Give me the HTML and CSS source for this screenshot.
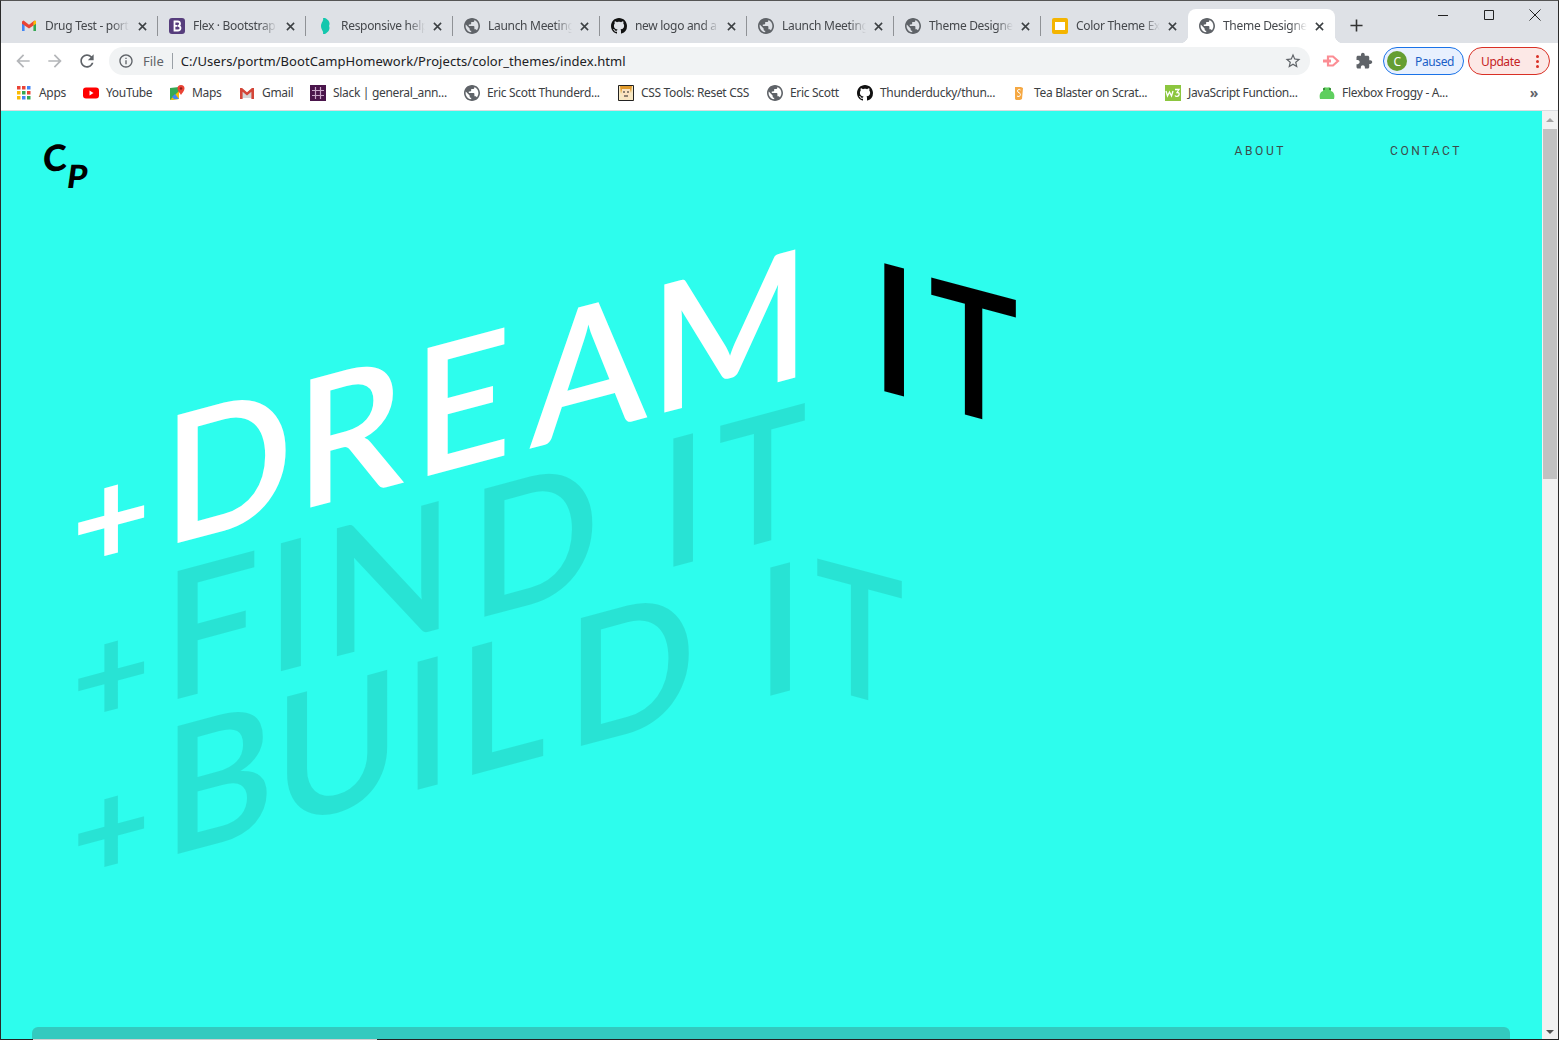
FILE: index.html
```html
<!DOCTYPE html>
<html lang="en">
<head>
    <meta charset="UTF-8">
    <meta name="viewport" content="width=device-width, initial-scale=1.0">
    <title>Theme Designer</title>
    <link rel="stylesheet" href="styles.css">
</head>
<body>
    <svg class="icon-defs">
        <symbol id="i-globe" viewBox="2 2 20 20"><path fill="#5f6368" d="M12 2C6.48 2 2 6.48 2 12s4.48 10 10 10 10-4.48 10-10S17.52 2 12 2zm-1 17.93c-3.95-.49-7-3.85-7-7.93 0-.62.08-1.21.21-1.79L9 15v1c0 1.1.9 2 2 2v1.93zm6.9-2.54c-.26-.81-1-1.39-1.9-1.39h-1v-3c0-.55-.45-1-1-1H8v-2h2c.55 0 1-.45 1-1V7h2c1.1 0 2-.9 2-2v-.41c2.93 1.19 5 4.06 5 7.41 0 2.08-.8 3.97-2.1 5.39z"/></symbol>
        <symbol id="i-github" viewBox="0 0 16 16"><path fill="#111" d="M8 0C3.58 0 0 3.58 0 8c0 3.54 2.29 6.53 5.47 7.59.4.07.55-.17.55-.38 0-.19-.01-.82-.01-1.49-2.01.37-2.53-.49-2.69-.94-.09-.23-.48-.94-.82-1.13-.28-.15-.68-.52-.01-.53.63-.01 1.08.58 1.23.82.72 1.21 1.87.87 2.33.66.07-.52.28-.87.51-1.07-1.78-.2-3.64-.89-3.64-3.95 0-.87.31-1.59.82-2.15-.08-.2-.36-1.02.08-2.12 0 0 .67-.21 2.2.82.64-.18 1.32-.27 2-.27.68 0 1.36.09 2 .27 1.53-1.04 2.2-.82 2.2-.82.44 1.1.16 1.92.08 2.12.51.56.82 1.27.82 2.15 0 3.07-1.87 3.75-3.65 3.95.29.25.54.73.54 1.48 0 1.07-.01 1.93-.01 2.2 0 .21.15.46.55.38A8.013 8.013 0 0016 8c0-4.42-3.58-8-8-8z"/></symbol>
        <symbol id="i-gmail" viewBox="0 0 16 16"><path fill="#4285f4" d="M1 4v9h2.6V6.5z"/><path fill="#34a853" d="M15 4v9h-2.6V6.5z"/><path fill="#ea4335" d="M1 3.6 2.6 2.6 8 6.8l5.4-4.2 1.6 1V5.8L8 10.6 1 5.8z"/><path fill="#fbbc04" d="M12.4 3.4 15 2.6v3.2l-2.6 1.8z"/></symbol>
        <symbol id="i-gmail-red" viewBox="0 0 16 16"><path fill="#d5d5d5" d="M3 3h10v10H3z"/><path fill="#fff" d="M3 3h10L8 8z"/><path fill="#d44638" d="M1 3h2l5 4.2L13 3h2v11h-2.6V6.8L8 10.4 3.600 6.800V14H1z"/></symbol>
        <symbol id="i-close" viewBox="0 0 10 10"><path fill="none" stroke="#3c4043" stroke-width="1.700" d="M1 1l8 8M9 1L1 9"/></symbol>
    </svg>

    <header class="tabstrip">
        <div class="tab">
            <svg class="favicon"><use href="#i-gmail"/></svg>
            <span class="tab-title">Drug Test - port</span>
            <svg class="tab-close"><use href="#i-close"/></svg>
        </div>
        <div class="tab">
            <svg class="favicon" viewBox="0 0 16 16"><rect width="16" height="16" rx="3" fill="#563d7c"/><path fill="none" stroke="#fff" stroke-width="1.8" d="M5.500 3.500h3.200c3 0 3 4 .4 4.300 3.300.2 3.100 4.700-.2 4.700H5.500zM5.500 7.900h3"/></svg>
            <span class="tab-title">Flex · Bootstrap</span>
            <svg class="tab-close"><use href="#i-close"/></svg>
        </div>
        <div class="tab">
            <svg class="favicon" viewBox="0 0 16 16"><path fill="#14c7ad" d="M6 0h2c4 2 5.500 5 4 8 1.500 3-.5 6-4 8H6c1-2.500-2-4.500-2-8s3-5.500 2-8z"/></svg>
            <span class="tab-title">Responsive help</span>
            <svg class="tab-close"><use href="#i-close"/></svg>
        </div>
        <div class="tab">
            <svg class="favicon"><use href="#i-globe"/></svg>
            <span class="tab-title">Launch Meeting</span>
            <svg class="tab-close"><use href="#i-close"/></svg>
        </div>
        <div class="tab">
            <svg class="favicon"><use href="#i-github"/></svg>
            <span class="tab-title">new logo and a</span>
            <svg class="tab-close"><use href="#i-close"/></svg>
        </div>
        <div class="tab">
            <svg class="favicon"><use href="#i-globe"/></svg>
            <span class="tab-title">Launch Meeting</span>
            <svg class="tab-close"><use href="#i-close"/></svg>
        </div>
        <div class="tab">
            <svg class="favicon"><use href="#i-globe"/></svg>
            <span class="tab-title">Theme Designer</span>
            <svg class="tab-close"><use href="#i-close"/></svg>
        </div>
        <div class="tab">
            <svg class="favicon" viewBox="0 0 16 16"><rect width="16" height="16" rx="2" fill="#f4b400"/><rect x="3" y="4" width="10" height="8" fill="#fff"/></svg>
            <span class="tab-title">Color Theme Ex</span>
            <svg class="tab-close"><use href="#i-close"/></svg>
        </div>
        <div class="tab tab-active">
            <svg class="favicon"><use href="#i-globe"/></svg>
            <span class="tab-title">Theme Designer</span>
            <svg class="tab-close"><use href="#i-close"/></svg>
        </div>
        <svg class="new-tab" viewBox="0 0 14 14"><path fill="none" stroke="#333" stroke-width="1.7" d="M7 .5v13M.5 7h13"/></svg>
        <div class="window-controls">
            <svg class="win-btn" viewBox="0 0 12 12"><path stroke="#222" d="M1 6.500h10"/></svg>
            <svg class="win-btn" viewBox="0 0 12 12"><path fill="none" stroke="#222" d="M1.500 1.500h9v9h-9z"/></svg>
            <svg class="win-btn" viewBox="0 0 12 12"><path stroke="#222" d="M.5.500l11 11M11.500.5l-11 11"/></svg>
        </div>
    </header>

    <div class="toolbar">
        <svg class="tool-icon" viewBox="0 0 24 24"><path fill="#b4b6b9" d="M20 11H7.830l5.590-5.590L12 4l-8 8 8 8 1.410-1.410L7.830 13H20v-2z"/></svg>
        <svg class="tool-icon" viewBox="0 0 24 24"><path fill="#b4b6b9" d="M4 11h12.170l-5.590-5.590L12 4l8 8-8 8-1.410-1.410L16.170 13H4v-2z"/></svg>
        <svg class="tool-icon" viewBox="0 0 24 24"><path fill="#5f6368" d="M17.650 6.350C16.200 4.900 14.210 4 12 4c-4.420 0-7.990 3.580-7.990 8s3.570 8 7.990 8c3.730 0 6.840-2.550 7.730-6h-2.080c-.82 2.330-3.040 4-5.650 4-3.310 0-6-2.690-6-6s2.690-6 6-6c1.660 0 3.140.69 4.220 1.780L13 11h7V4l-2.350 2.350z"/></svg>
        <div class="omnibox">
            <svg class="omni-info" viewBox="0 0 24 24"><path fill="#5f6368" d="M11 7h2v2h-2zm0 4h2v6h-2zm1-9C6.480 2 2 6.480 2 12s4.480 10 10 10 10-4.480 10-10S17.520 2 12 2zm0 18c-4.410 0-8-3.590-8-8s3.590-8 8-8 8 3.590 8 8-3.590 8-8 8z"/></svg>
            <span class="omni-file">File</span>
            <span class="omni-url">C:/Users/portm/BootCampHomework/Projects/color_themes/index.html</span>
            <svg class="omni-star" viewBox="0 0 24 24"><path fill="#5f6368" d="M22 9.240l-7.190-.62L12 2 9.190 8.630 2 9.240l5.460 4.730L5.820 21 12 17.270 18.180 21l-1.630-7.030L22 9.240zM12 15.400l-3.760 2.270 1-4.280-3.320-2.880 4.380-.38L12 6.100l1.710 4.040 4.380.38-3.320 2.880 1 4.280L12 15.400z"/></svg>
        </div>
        <svg class="ext-icon" viewBox="0 0 18 16"><path fill="none" stroke="#fb8d94" stroke-width="2.200" d="M5 3.500h5l5 4.500-5 4.500H5z"/><path fill="#fb8d94" d="M0 6.500h8v3H0z"/></svg>
        <svg class="ext-icon puzzle" viewBox="0 0 24 24"><path fill="#5f6368" d="M20.500 11H19V7c0-1.100-.9-2-2-2h-4V3.500C13 2.120 11.880 1 10.500 1S8 2.120 8 3.500V5H4c-1.100 0-1.990.9-1.990 2v3.800H3.500c1.490 0 2.700 1.210 2.700 2.700s-1.210 2.700-2.700 2.700H2V20c0 1.100.9 2 2 2h3.800v-1.500c0-1.490 1.210-2.700 2.700-2.700 1.490 0 2.700 1.210 2.700 2.700V22H17c1.100 0 2-.9 2-2v-4h1.500c1.380 0 2.500-1.120 2.500-2.500S21.880 11 20.500 11z"/></svg>
        <div class="pill pill-paused">
            <span class="avatar">C</span>
            <span class="pill-text">Paused</span>
        </div>
        <div class="pill pill-update">
            <span class="pill-text">Update</span>
            <span class="update-dots"><i></i><i></i><i></i></span>
        </div>
    </div>

    <nav class="bookmarks">
        <div class="bookmark-grid">
            <a class="bookmark">
                <svg class="favicon" viewBox="0 0 16 16"><g fill="#ea4335"><rect x="1" y="1" width="3.500" height="3.500"/><rect x="6" y="1" width="3.500" height="3.500"/></g><rect x="11" y="1" width="3.500" height="3.500" fill="#4285f4"/><g fill="#fbbc04"><rect x="1" y="6" width="3.500" height="3.500"/><rect x="1" y="11" width="3.500" height="3.500"/></g><rect x="6" y="6" width="3.500" height="3.500" fill="#34a853"/><rect x="11" y="6" width="3.500" height="3.500" fill="#ea4335"/><rect x="6" y="11" width="3.500" height="3.500" fill="#4285f4"/><rect x="11" y="11" width="3.500" height="3.500" fill="#34a853"/></svg>
                Apps
            </a>
            <a class="bookmark">
                <svg class="favicon" viewBox="0 0 16 16"><rect y="2.500" width="16" height="11" rx="3" fill="#f00"/><path fill="#fff" d="M6.500 5.500v5L10.500 8z"/></svg>
                YouTube
            </a>
            <a class="bookmark">
                <svg class="favicon" viewBox="0 0 16 16"><path fill="#34a853" d="M1 3l9-1v12l-9 1z"/><path fill="#fbbc04" d="M1 15l9-9v8z"/><path fill="#4285f4" d="M6 9l4 5H5L3 12z"/><path fill="#ea4335" d="M12 0a3.500 3.500 0 013.500 3.500C15.500 6 13 8 12 10c-1-2-3.500-4-3.500-6.500A3.500 3.500 0 0112 0z"/><circle cx="12" cy="3.500" r="1.200" fill="#8c1d18"/></svg>
                Maps
            </a>
            <a class="bookmark">
                <svg class="favicon"><use href="#i-gmail-red"/></svg>
                Gmail
            </a>
            <a class="bookmark">
                <svg class="favicon" viewBox="0 0 16 16"><rect width="16" height="16" fill="#4a154b"/><path stroke="#c9a7c9" stroke-width="1.200" d="M5.500 2v12M10.500 2v12M2 5.500h12M2 10.500h12"/></svg>
                Slack | general_ann...
            </a>
            <a class="bookmark">
                <svg class="favicon"><use href="#i-globe"/></svg>
                Eric Scott Thunderd...
            </a>
            <a class="bookmark">
                <svg class="favicon" viewBox="0 0 16 16"><rect width="16" height="16" fill="#f7e8c4"/><path fill="#e09a2b" d="M2 1h12l-1 7-1-4H4L3 9z"/><path fill="#fbe2c0" d="M4 4h8v7l-4 4-4-4z"/><path stroke="#222" fill="none" d="M5 7h2M9 7h2M6 11h4M.5.500h15v15H.5z"/></svg>
                CSS Tools: Reset CSS
            </a>
            <a class="bookmark">
                <svg class="favicon"><use href="#i-globe"/></svg>
                Eric Scott
            </a>
            <a class="bookmark">
                <svg class="favicon"><use href="#i-github"/></svg>
                Thunderducky/thun...
            </a>
            <a class="bookmark">
                <svg class="favicon" viewBox="0 0 16 16"><path fill="#f5a843" d="M4 2h6l2 1-1 11-2 1H5l-1-1z"/><path fill="none" stroke="#fff" d="M9.500 5C9 4 6.500 4 6.500 6c0 2 3 1.500 3 3.500S7 12 6 11"/></svg>
                Tea Blaster on Scrat...
            </a>
            <a class="bookmark">
                <svg class="favicon" viewBox="0 0 16 16"><rect width="16" height="16" fill="#8cc63f"/><path fill="none" stroke="#fff" stroke-width="1.300" d="M1 6l1.500 5L4.500 7l2 4L8 6M10 4.500h4l-2 3c2 0 2.500 1 2 2.500s-3 2-4 .5"/></svg>
                JavaScript Function...
            </a>
            <a class="bookmark">
                <svg class="favicon" viewBox="0 0 16 16"><path fill="#5fcf5f" d="M1 14c-1-4 0-7 3-8V4a2 2 0 013-1.500h2A2 2 0 0112 4v2c3 1 4 4 3 8z"/><circle cx="5" cy="4" r="1" fill="#2a7d2a"/><circle cx="11" cy="4" r="1" fill="#2a7d2a"/></svg>
                Flexbox Froggy - A...
            </a>
        </div>
        <span class="bookmark-more">&raquo;</span>
    </nav>

    <div class="viewport">
        <main class="page">
            <div class="topnav">
                <div class="logo"><span class="logo-c">C</span><span class="logo-p">P</span></div>
                <div class="nav-links">
                    <a class="nav-link">ABOUT</a>
                    <a class="nav-link">CONTACT</a>
                </div>
            </div>

            <section class="hero">
                <div class="hero-line hero-dream">
                    <span class="plus">+</span>
                    <span class="word rise w-dream">DR<span class="k-e">E</span><span class="k-am">AM</span></span>
                    <span class="glyph-i fall i-dream">I</span>
                    <span class="glyph-t fall t-dream">T</span>
                </div>
                <div class="hero-line hero-faint">
                    <span class="plus">+</span>
                    <span class="word rise w-find">FIN<span class="k-find-d">D</span></span>
                    <span class="glyph-i rise i-find">I</span>
                    <span class="glyph-t rise t-find">T</span>
                </div>
                <div class="hero-line hero-faint">
                    <span class="plus">+</span>
                    <span class="word rise w-build">B<span class="k-u">U</span><span class="k-i">I</span><span class="k-l">L</span><span class="k-build-d">D</span></span>
                    <span class="glyph-i rise i-build">I</span>
                    <span class="glyph-t fall t-build">T</span>
                </div>
            </section>

            <div class="peek-bar"></div>
        </main>
        <aside class="scrollbar">
            <span class="arrow-up"></span>
            <span class="thumb"></span>
            <span class="arrow-down"></span>
        </aside>
    </div>
    <div class="bottom-edge"><span class="bottom-peek"></span></div>
</body>
</html>
```

FILE: styles.css
```css
* {
    box-sizing: border-box;
}
html, body {
    height: 100%;
}
body {
    margin: 0;
    display: flex;
    flex-direction: column;
    overflow: hidden;
    background-color: #ffffff;
    border-left: 1px solid #2a2a2a;
    border-right: 1px solid #2a2a2a;
    border-top: 1px solid #555;
    font-family: "Noto Sans", "Open Sans", sans-serif;
    color: #3c4043;
}
.icon-defs {
    display: none;
}

/* tabs */
.tabstrip {
    display: flex;
    height: 42px;
    flex-shrink: 0;
    padding: 8px 0 0 10px;
    background-color: #dee1e6;
}
.tab {
    width: 147px;
    height: 34px;
    display: flex;
    align-items: center;
    flex-shrink: 0;
    padding: 0 0 0 11px;
    font-size: 12px;
    letter-spacing: -0.3px;
    color: #45484c;
    position: relative;
}
.tab:first-child {
    padding-left: 10px;
}
.tab:nth-child(2) {
    width: 148px;
}
.tab::after {
    content: "";
    width: 1px;
    height: 20px;
    background-color: #8f9296;
    margin-left: auto;
    flex-shrink: 0;
}
.tab:nth-last-of-type(-n+3)::after {
    display: none;
}
.tab-active {
    background-color: #ffffff;
    border-radius: 8px 8px 0 0;
}
.tab-active::before,
.tab-active:nth-last-of-type(-n+3)::after {
    content: "";
    display: block;
    position: absolute;
    bottom: 0;
    width: 8px;
    height: 8px;
    margin: 0;
    background-color: transparent;
}
.tab-active::before {
    left: -8px;
    background-image: radial-gradient(circle at 0 0, transparent 8px, #ffffff 8.5px);
}
.tab-active:nth-last-of-type(-n+3)::after {
    right: -8px;
    background-image: radial-gradient(circle at 100% 0, transparent 8px, #ffffff 8.5px);
}
.favicon {
    width: 16px;
    height: 16px;
    flex-shrink: 0;
}
.tab-title {
    width: 84px;
    margin-left: 8px;
    margin-bottom: 1px;
    white-space: nowrap;
    overflow: hidden;
    -webkit-mask-image: linear-gradient(90deg, #000 80%, transparent);
    mask-image: linear-gradient(90deg, #000 80%, transparent);
}
.tab-close {
    width: 9px;
    height: 9px;
    margin-left: 8px;
    flex-shrink: 0;
}
.tab:first-child .tab-close,
.tab:nth-child(2) .tab-close {
    margin-left: 9px;
}
.new-tab {
    width: 13px;
    height: 13px;
    margin: 10px 0 0 15px;
}
.window-controls {
    margin-left: auto;
    display: flex;
    gap: 34px;
    padding: 0 17px 0 0;
    height: 12px;
}
.win-btn {
    width: 12px;
    height: 12px;
}

/* toolbar */
.toolbar {
    display: flex;
    align-items: center;
    height: 34px;
    flex-shrink: 0;
    padding: 2px 8px 0 12px;
    background-color: #ffffff;
}
.tool-icon {
    width: 20px;
    height: 20px;
    margin-right: 12px;
}
.omnibox {
    width: 1202px;
    height: 28px;
    display: flex;
    align-items: center;
    padding: 0 8px 0 9px;
    background-color: #f1f3f4;
    border-radius: 14px;
}
.omni-info {
    width: 16px;
    height: 16px;
}
.omni-file {
    font-size: 13px;
    color: #5f6368;
    margin-left: 9px;
    padding-right: 8px;
    border-right: 1px solid #9aa0a6;
    line-height: 16px;
}
.omni-url {
    font-size: 13px;
    letter-spacing: 0.06px;
    color: #202124;
    margin-left: 8px;
}
.omni-star {
    width: 18px;
    height: 18px;
    margin-left: auto;
}
.ext-icon {
    width: 18px;
    height: 16px;
    margin-left: 13px;
}
.puzzle {
    height: 18px;
    margin-left: 14px;
}
.pill {
    height: 28px;
    border-radius: 14px;
    display: flex;
    align-items: center;
    font-size: 12px;
    letter-spacing: -0.4px;
}
.pill-paused {
    width: 81px;
    margin-left: 10px;
    padding-left: 3px;
    border: 1px solid #1a73e8;
    background-color: #e8f0fe;
    color: #1a5fc7;
}
.avatar {
    width: 20px;
    height: 20px;
    border-radius: 50%;
    background-color: #659e32;
    color: #ffffff;
    font-size: 12px;
    display: flex;
    align-items: center;
    justify-content: center;
    margin-right: 8px;
}
.pill-update {
    width: 82px;
    margin-left: 4px;
    padding: 0 10px 0 12px;
    border: 1px solid #d93025;
    background-color: #fce8e6;
    color: #c5221f;
    justify-content: space-between;
}
.update-dots {
    display: flex;
    flex-direction: column;
    gap: 2px;
}
.update-dots i {
    width: 3px;
    height: 3px;
    border-radius: 50%;
    background-color: #d93025;
}

/* bookmarks */
.bookmarks {
    display: flex;
    align-items: center;
    height: 34px;
    flex-shrink: 0;
    padding: 0 20px 2px 15px;
    background-color: #ffffff;
    border-bottom: 1px solid #dadce0;
    font-size: 12px;
    letter-spacing: -0.32px;
}
.bookmark-grid {
    display: grid;
    grid-template-columns: 67px 86px 70px 71px 154px 154px 149px 90px 154px 154px 154px auto;
}
.bookmark {
    display: flex;
    align-items: center;
    gap: 7px;
    white-space: nowrap;
    color: #3c4043;
}
.bookmark-more {
    margin-left: auto;
    font-size: 14px;
    font-weight: 700;
    color: #5f6368;
}

/* page */
.viewport {
    flex: 1;
    display: flex;
    min-height: 0;
}
.page {
    flex: 1;
    min-width: 0;
    display: flex;
    flex-direction: column;
    overflow: hidden;
    background-color: #2dfded;
}
.topnav {
    display: flex;
    justify-content: space-between;
    height: 100px;
    padding: 27px 80px 0 42px;
    flex-shrink: 0;
}
.logo {
    display: flex;
    font-family: "Lato", sans-serif;
    font-weight: 900;
    line-height: 38px;
    color: #000000;
}
.logo-c {
    font-size: 36px;
    transform: skewY(-6deg);
}
.logo-p {
    font-size: 32px;
    transform: translate(-2px, 19px) skewX(-8deg);
}
.nav-links {
    display: flex;
    gap: 104px;
    padding-top: 6px;
}
.nav-link {
    font-family: "Roboto", sans-serif;
    font-size: 12px;
    line-height: 15px;
    letter-spacing: 2.6px;
    color: #3d4a4a;
}

/* hero: every word sits on a baseline 147px below the top of its line */
.hero {
    flex: 1;
    padding: 189px 0 0 71px;
    font-family: "Lato", sans-serif;
    font-size: 178px;
    font-weight: 600;
    line-height: 156px;
    white-space: nowrap;
}
.hero-line {
    display: flex;
    height: 155.6px;
}
.hero-dream .plus,
.hero-dream .word {
    color: #ffffff;
}
.hero-dream .fall {
    color: #000000;
}
.hero-faint {
    color: rgba(0, 0, 0, 0.1);
}
.plus {
    width: 91px;
    flex-shrink: 0;
    font-size: 135px;
    font-weight: 700;
    transform-origin: 0 130px;
    transform: translateY(46px) skewY(-15deg);
}
.word,
.glyph-i,
.glyph-t {
    display: block;
    flex-shrink: 0;
    transform-origin: 0 147px;
}
.word {
    transform: skewY(-15deg) scaleX(0.96);
}
.w-dream {
    width: 706px;
    letter-spacing: 3px;
}
.w-find {
    width: 495px;
    letter-spacing: 7px;
}
.w-build {
    width: 592px;
    letter-spacing: -2.5px;
}
.k-e {
    margin-left: 6px;
}
.k-am {
    margin-left: 16px;
}
.k-find-d {
    margin-left: 10px;
}
.k-u {
    margin-left: 2px;
}
.k-i {
    margin-left: 5px;
}
.k-l {
    margin-left: 8px;
}
.k-build-d {
    margin-left: 24px;
}
.glyph-i {
    width: 59.500px;
}
.i-dream {
    transform: translate(1px, -159.600px) skewY(15deg) scaleX(0.94);
}
.i-find {
    transform: translate(1px, -132.600px) skewY(-15deg) scaleX(0.94);
}
.i-build {
    transform: translate(1px, -158.600px) skewY(-15deg) scaleX(0.94);
}
.t-dream {
    transform: translateY(-142px) skewY(15deg) scaleX(0.84);
}
.t-find {
    transform: translateY(-148.500px) skewY(-15deg) scaleX(0.84);
}
.t-build {
    transform: translateY(-172px) skewY(15deg) scaleX(0.84);
}
.peek-bar {
    height: 12px;
    margin: 0 32px 0 31px;
    flex-shrink: 0;
    border-radius: 6px 6px 0 0;
    background-color: #33cabf;
}

/* scrollbar */
.scrollbar {
    width: 16px;
    flex-shrink: 0;
    display: flex;
    flex-direction: column;
    align-items: center;
    background-color: #f1f1f1;
}
.arrow-up {
    margin-top: 7px;
    border: 4px solid transparent;
    border-top: 0;
    border-bottom: 4px solid #a3a3a3;
}
.thumb {
    width: 14px;
    height: 350px;
    margin-top: 7px;
    background-color: #c1c1c1;
}
.arrow-down {
    margin: auto 0 5px;
    border: 4px solid transparent;
    border-bottom: 0;
    border-top: 4px solid #505050;
}
.bottom-edge {
    height: 1px;
    flex-shrink: 0;
    display: flex;
    padding-left: 32px;
    background-color: #222222;
}
.bottom-peek {
    width: 344px;
    background-color: #cfcfcf;
}
```
